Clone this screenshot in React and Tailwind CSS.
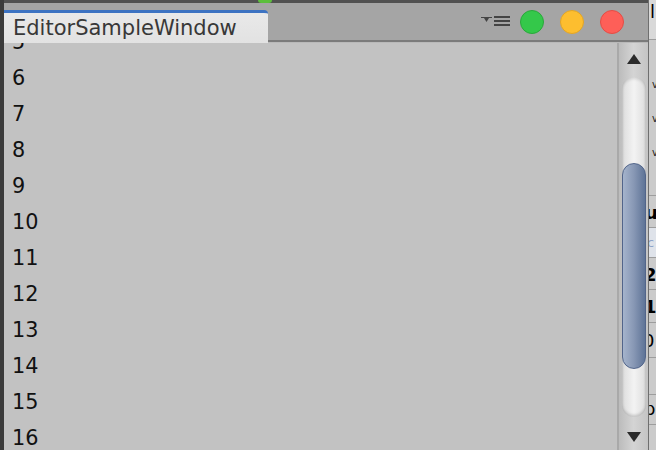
const rows = Array.from({ length: 13 }, (_, i) => i + 5)

function Arrow({ down }) {
  return (
    <svg width="14" height="10" viewBox="0 0 14 10">
      <path d={down ? 'M0 0 H14 L7 10 Z' : 'M7 0 L14 10 H0 Z'} fill="#2b2b2b" />
    </svg>
  )
}

function Scrollbar() {
  return (
    <div className="w-[31px] flex flex-col items-center border-l-2 border-[#a9a9a9] bg-gradient-to-r from-[#bcbcbc] via-[#d4d4d4] to-[#c4c4c4]">
      <div className="mt-[11px]">
        <Arrow />
      </div>
      <div className="mt-[13px] w-[24px] h-[340px] rounded-full bg-gradient-to-r from-[#dcdcdc] via-[#f3f3f3] to-[#dddddd] shadow-[inset_0_-2px_3px_rgba(0,0,0,0.18),inset_0_2px_3px_rgba(0,0,0,0.12)] flex flex-col">
        <div className="mt-[86px] h-[206px] rounded-full border border-[#52658a] bg-gradient-to-r from-[#a5b4cc] via-[#8797b4] to-[#5f7497]" />
      </div>
      <div className="mt-[15px]">
        <Arrow down />
      </div>
    </div>
  )
}

function BackWindow() {
  const line = 'border-b border-[#9d9d9d]'
  return (
    <div className="w-[7px] flex flex-col bg-[#cbcbcb] overflow-hidden text-[18px] leading-none text-black">
      <div className={`h-[40px] bg-[#d9d9d9] ${line} pl-[1px] pt-[3px]`}>l</div>
      <div className={`h-[156px] ${line} flex flex-col pl-[3px] pt-[40px] gap-[24px] text-[#222]`}>
        <span className="text-[10px]">v</span>
        <span className="text-[10px]">v</span>
        <span className="text-[10px]">v</span>
      </div>
      <div className={`h-[32px] ${line} font-bold pt-[8px] -ml-[4px]`}>u</div>
      <div className={`h-[30px] ${line} bg-[#dfe3ea] text-[13px] text-[#8fa3c8] pt-[8px] -ml-[2px]`}>c</div>
      <div className={`h-[32px] ${line} pt-[8px] -ml-[5px] font-bold`}>2</div>
      <div className={`h-[33px] ${line} pt-[8px] -ml-[5px] font-bold`}>1</div>
      <div className={`h-[35px] ${line} pt-[9px] -ml-[6px]`}>0</div>
      <div className={`h-[37px] ${line}`} />
      <div className={`h-[30px] ${line} pt-[5px] -ml-[5px]`}>p</div>
      <div className="flex-1" />
    </div>
  )
}

export default function App() {
  return (
    <div className="w-[656px] h-[450px] flex bg-[#3b3b3b] overflow-hidden font-['DejaVu_Sans',sans-serif]">
      <div className="w-[4px]" />
      <div className="w-[644px] flex flex-col">
        <div className="h-[3px] bg-[#515151] flex">
          <div className="ml-[254px] w-[14px] h-[3px] rounded-b-full bg-[#5cbf3c]" />
        </div>
        <div className="h-[40px] flex items-end bg-[#a5a5a5]">
          <div className="w-[264px] h-[33px] border-t-[3px] border-[#3d73c2] rounded-tr-[4px] bg-gradient-to-b from-[#e9e9e9] to-[#e2e2e2] pl-[9px] text-[21px] leading-[30px] text-[#383838]">
            EditorSampleWindow
          </div>
          <div className="flex-1 self-stretch flex flex-col">
            <div className="flex-1 flex items-start justify-end pt-[7px] pr-[24px]">
              <div className="flex items-start mt-[6px] mr-[10px]">
                <svg width="11" height="6" viewBox="0 0 11 6" className="mt-[1px]">
                  <path d="M0 0 H11 V1 H8 L5.5 5 L3 1 H0 Z" fill="#444" />
                </svg>
                <div className="ml-[2px] flex flex-col gap-[2px]">
                  <div className="w-[16px] h-[2px] bg-[#444]" />
                  <div className="w-[16px] h-[2px] bg-[#444]" />
                  <div className="w-[16px] h-[2px] bg-[#444]" />
                </div>
              </div>
              <div className="flex gap-[16px]">
                <div className="w-[24px] h-[24px] rounded-full bg-[#34c84a] border border-[#2aa83b]" />
                <div className="w-[24px] h-[24px] rounded-full bg-[#fdbe2f] border border-[#e2a526]" />
                <div className="w-[24px] h-[24px] rounded-full bg-[#fe5f58] border border-[#e44d45]" />
              </div>
            </div>
            <div className="h-[2px] bg-[#7b7b7b]" />
            <div className="h-[1px] bg-[#b9b9b9]" />
          </div>
        </div>
        <div className="flex-1 flex min-h-0">
          <div className="flex-1 bg-[#c2c2c2] overflow-hidden pl-[8px]">
            <div className="-mt-[19px]">
              {rows.map(n => (
                <div key={n} className="h-[36px] text-[20.8px] leading-[36px] text-[#111]">
                  {n}
                </div>
              ))}
            </div>
          </div>
          <Scrollbar />
        </div>
      </div>
      <div className="w-[1px] bg-[#6f6f6f]" />
      <BackWindow />
    </div>
  )
}
